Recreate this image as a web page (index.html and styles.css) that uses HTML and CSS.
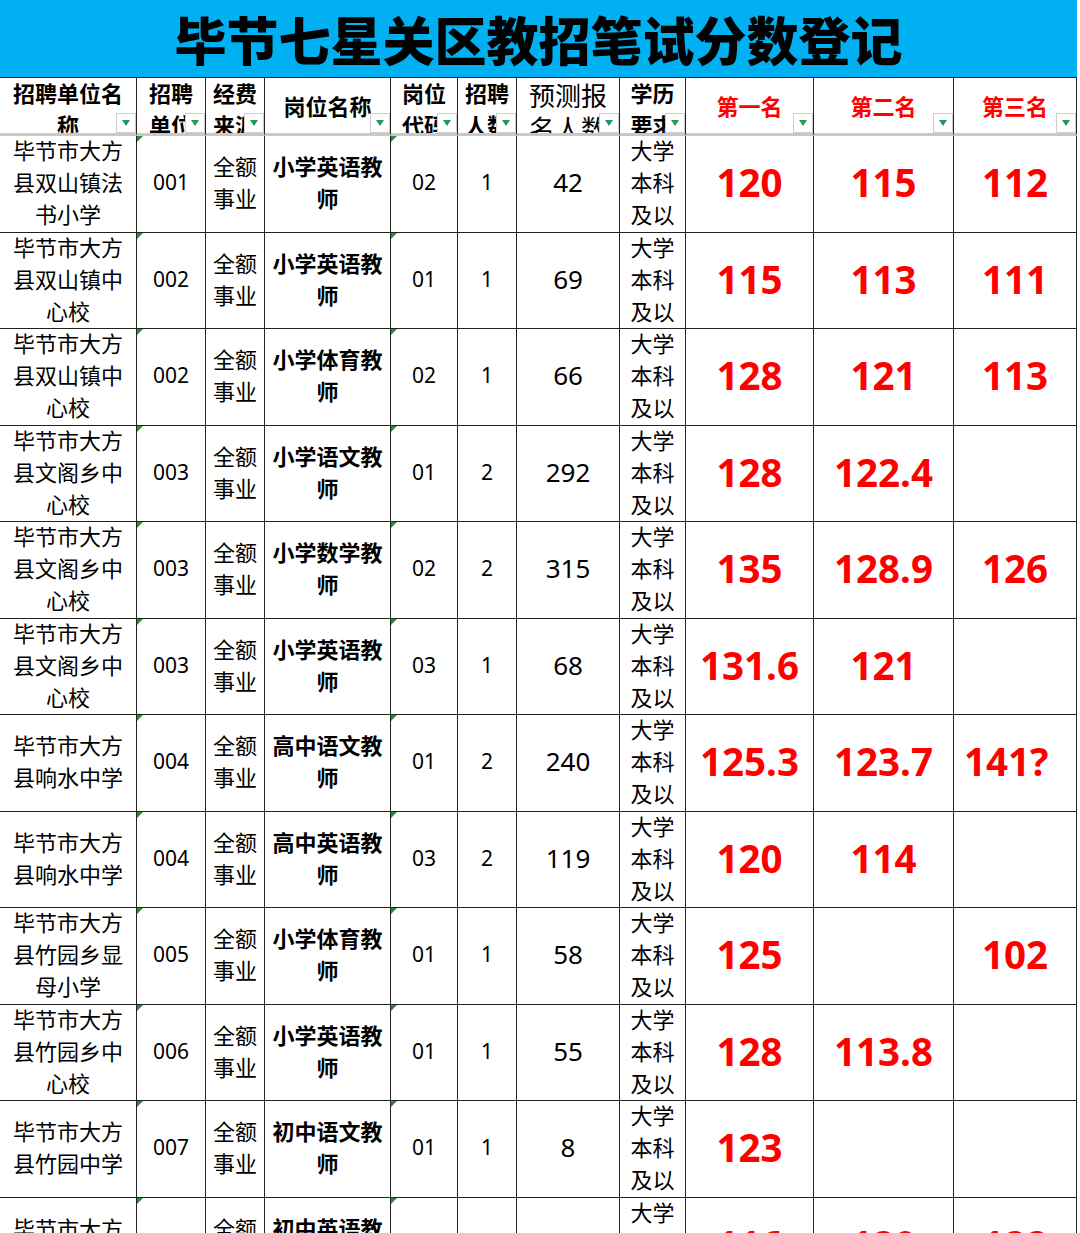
FILE: index.html
```html
<!DOCTYPE html>
<html lang="zh-CN">
<head>
<meta charset="utf-8">
<title>毕节七星关区教招笔试分数登记</title>
<link rel="stylesheet" href="styles.css">
</head>
<body>
<div class="sheet">
  <div class="title">毕节七星关区教招笔试分数登记</div>

  <div class="h top"><span>招聘单位名称</span><i class="f"></i></div>
  <div class="h top"><span>招聘单位代码</span><i class="f"></i></div>
  <div class="h top"><span>经费来源</span><i class="f"></i></div>
  <div class="h"><span>岗位名称</span><i class="f"></i></div>
  <div class="h top"><span>岗位代码</span><i class="f"></i></div>
  <div class="h top"><span>招聘人数</span><i class="f"></i></div>
  <div class="h top big"><span>预测报名人数</span><i class="f"></i></div>
  <div class="h top"><span>学历要求</span><i class="f"></i></div>
  <div class="h red"><span>第一名</span><i class="f"></i></div>
  <div class="h red"><span>第二名</span><i class="f"></i></div>
  <div class="h red"><span>第三名</span><i class="f"></i></div>

  <div class="d"><span>毕节市大方县双山镇法书小学</span></div>
  <div class="d mk num"><span>001</span></div>
  <div class="d"><span>全额事业</span></div>
  <div class="d b"><span>小学英语教师</span></div>
  <div class="d mk num"><span>02</span></div>
  <div class="d num"><span>1</span></div>
  <div class="d cnt"><span>42</span></div>
  <div class="d edu"><span>大学本科及以上</span></div>
  <div class="d s"><span>120</span></div>
  <div class="d s"><span>115</span></div>
  <div class="d s"><span>112</span></div>

  <div class="d"><span>毕节市大方县双山镇中心校</span></div>
  <div class="d mk num"><span>002</span></div>
  <div class="d"><span>全额事业</span></div>
  <div class="d b"><span>小学英语教师</span></div>
  <div class="d mk num"><span>01</span></div>
  <div class="d num"><span>1</span></div>
  <div class="d cnt"><span>69</span></div>
  <div class="d edu"><span>大学本科及以上</span></div>
  <div class="d s"><span>115</span></div>
  <div class="d s"><span>113</span></div>
  <div class="d s"><span>111</span></div>

  <div class="d"><span>毕节市大方县双山镇中心校</span></div>
  <div class="d mk num"><span>002</span></div>
  <div class="d"><span>全额事业</span></div>
  <div class="d b"><span>小学体育教师</span></div>
  <div class="d mk num"><span>02</span></div>
  <div class="d num"><span>1</span></div>
  <div class="d cnt"><span>66</span></div>
  <div class="d edu"><span>大学本科及以上</span></div>
  <div class="d s"><span>128</span></div>
  <div class="d s"><span>121</span></div>
  <div class="d s"><span>113</span></div>

  <div class="d"><span>毕节市大方县文阁乡中心校</span></div>
  <div class="d mk num"><span>003</span></div>
  <div class="d"><span>全额事业</span></div>
  <div class="d b"><span>小学语文教师</span></div>
  <div class="d mk num"><span>01</span></div>
  <div class="d num"><span>2</span></div>
  <div class="d cnt"><span>292</span></div>
  <div class="d edu"><span>大学本科及以上</span></div>
  <div class="d s"><span>128</span></div>
  <div class="d s"><span>122.4</span></div>
  <div class="d s"></div>

  <div class="d"><span>毕节市大方县文阁乡中心校</span></div>
  <div class="d mk num"><span>003</span></div>
  <div class="d"><span>全额事业</span></div>
  <div class="d b"><span>小学数学教师</span></div>
  <div class="d mk num"><span>02</span></div>
  <div class="d num"><span>2</span></div>
  <div class="d cnt"><span>315</span></div>
  <div class="d edu"><span>大学本科及以上</span></div>
  <div class="d s"><span>135</span></div>
  <div class="d s"><span>128.9</span></div>
  <div class="d s"><span>126</span></div>

  <div class="d"><span>毕节市大方县文阁乡中心校</span></div>
  <div class="d mk num"><span>003</span></div>
  <div class="d"><span>全额事业</span></div>
  <div class="d b"><span>小学英语教师</span></div>
  <div class="d mk num"><span>03</span></div>
  <div class="d num"><span>1</span></div>
  <div class="d cnt"><span>68</span></div>
  <div class="d edu"><span>大学本科及以上</span></div>
  <div class="d s"><span>131.6</span></div>
  <div class="d s"><span>121</span></div>
  <div class="d s"></div>

  <div class="d"><span>毕节市大方县响水中学</span></div>
  <div class="d mk num"><span>004</span></div>
  <div class="d"><span>全额事业</span></div>
  <div class="d b"><span>高中语文教师</span></div>
  <div class="d mk num"><span>01</span></div>
  <div class="d num"><span>2</span></div>
  <div class="d cnt"><span>240</span></div>
  <div class="d edu"><span>大学本科及以上</span></div>
  <div class="d s"><span>125.3</span></div>
  <div class="d s"><span>123.7</span></div>
  <div class="d s left"><span>141?</span></div>

  <div class="d"><span>毕节市大方县响水中学</span></div>
  <div class="d mk num"><span>004</span></div>
  <div class="d"><span>全额事业</span></div>
  <div class="d b"><span>高中英语教师</span></div>
  <div class="d mk num"><span>03</span></div>
  <div class="d num"><span>2</span></div>
  <div class="d cnt"><span>119</span></div>
  <div class="d edu"><span>大学本科及以上</span></div>
  <div class="d s"><span>120</span></div>
  <div class="d s"><span>114</span></div>
  <div class="d s"></div>

  <div class="d"><span>毕节市大方县竹园乡显母小学</span></div>
  <div class="d mk num"><span>005</span></div>
  <div class="d"><span>全额事业</span></div>
  <div class="d b"><span>小学体育教师</span></div>
  <div class="d mk num"><span>01</span></div>
  <div class="d num"><span>1</span></div>
  <div class="d cnt"><span>58</span></div>
  <div class="d edu"><span>大学本科及以上</span></div>
  <div class="d s"><span>125</span></div>
  <div class="d s"></div>
  <div class="d s"><span>102</span></div>

  <div class="d"><span>毕节市大方县竹园乡中心校</span></div>
  <div class="d mk num"><span>006</span></div>
  <div class="d"><span>全额事业</span></div>
  <div class="d b"><span>小学英语教师</span></div>
  <div class="d mk num"><span>01</span></div>
  <div class="d num"><span>1</span></div>
  <div class="d cnt"><span>55</span></div>
  <div class="d edu"><span>大学本科及以上</span></div>
  <div class="d s"><span>128</span></div>
  <div class="d s"><span>113.8</span></div>
  <div class="d s"></div>

  <div class="d"><span>毕节市大方县竹园中学</span></div>
  <div class="d mk num"><span>007</span></div>
  <div class="d"><span>全额事业</span></div>
  <div class="d b"><span>初中语文教师</span></div>
  <div class="d mk num"><span>01</span></div>
  <div class="d num"><span>1</span></div>
  <div class="d cnt"><span>8</span></div>
  <div class="d edu"><span>大学本科及以上</span></div>
  <div class="d s"><span>123</span></div>
  <div class="d s"></div>
  <div class="d s"></div>

  <div class="d"><span>毕节市大方县竹园中学</span></div>
  <div class="d mk num"><span>007</span></div>
  <div class="d"><span>全额事业</span></div>
  <div class="d b"><span>初中英语教师</span></div>
  <div class="d mk num"><span>02</span></div>
  <div class="d num"><span>1</span></div>
  <div class="d cnt"><span>10</span></div>
  <div class="d edu"><span>大学本科及以上</span></div>
  <div class="d s"><span>116</span></div>
  <div class="d s"><span>120</span></div>
  <div class="d s"><span>122</span></div>
</div>
</body>
</html>
```

FILE: styles.css
```css
* { box-sizing: border-box; }

html, body {
  margin: 0;
  padding: 0;
  background: #ffffff;
}

body {
  font-family: "Noto Sans", "Noto Sans CJK SC", sans-serif;
  color: #000;
}

.sheet {
  display: grid;
  grid-template-columns: 137px 69px 59px 126px 67px 59px 103px 66px 128px 140px 123px;
  width: 1077px;
}

.title {
  grid-column: 1 / -1;
  height: 78px;
  background: #00b0f0;
  border-bottom: 1px solid #222;
  display: flex;
  align-items: center;
  justify-content: center;
  font-family: "Noto Sans CJK SC", sans-serif;
  font-weight: 900;
  font-size: 52px;
  line-height: 1;
  color: #000;
}

.h {
  position: relative;
  height: 58px;
  border-right: 1px solid #222;
  border-bottom: 3px solid #c8c8c8;
  display: flex;
  align-items: center;
  justify-content: center;
  text-align: center;
  overflow: hidden;
  padding: 0 3px 2px;
  font-family: "Noto Sans CJK SC", sans-serif;
  font-weight: 700;
  font-size: 22px;
  line-height: 32px;
}

.h.top { align-items: flex-start; }

.h.top span { margin-top: -2px; }

.h.big {
  font-weight: 400;
  font-size: 26px;
  line-height: 33px;
}

.h.big span { margin-top: 0; }

.h.red { color: #ff0000; }

.f {
  position: absolute;
  right: 0;
  bottom: 0;
  width: 20px;
  height: 20px;
  border: 1px solid #cfcfcf;
  background: #ffffff;
  display: flex;
  align-items: center;
  justify-content: center;
}

.f::after {
  content: "";
  width: 0;
  height: 0;
  border-left: 4.5px solid transparent;
  border-right: 4.5px solid transparent;
  border-top: 6px solid #1e9b57;
}

.d {
  position: relative;
  height: 96.5px;
  border-right: 1px solid #222;
  border-bottom: 1px solid #222;
  display: flex;
  align-items: center;
  justify-content: center;
  text-align: center;
  overflow: hidden;
  padding: 0 3px 3px;
  font-size: 22px;
  line-height: 32px;
}

.d.b { font-weight: 700; }

.d.num { font-size: 21px; }

.d.cnt { font-size: 26px; }

.d.edu {
  align-items: flex-start;
  padding-bottom: 0;
}

.d.edu span { margin-top: -2px; }

.d.s {
  color: #ff0000;
  font-weight: 700;
  font-size: 38.5px;
  line-height: 1;
}

.d.s.left {
  justify-content: flex-start;
  padding-left: 10px;
}

.mk::before {
  content: "";
  position: absolute;
  top: 0;
  left: 0;
  width: 0;
  height: 0;
  border-top: 6px solid #2e8b2e;
  border-right: 6px solid transparent;
}
```
